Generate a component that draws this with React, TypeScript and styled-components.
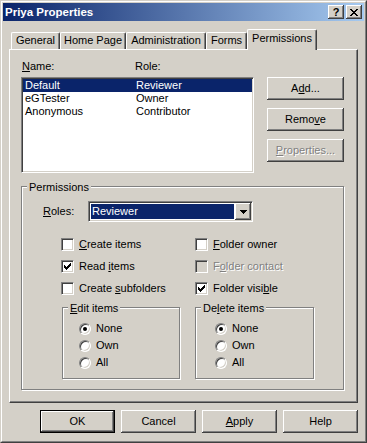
import React from "react";
import styled, { createGlobalStyle } from "styled-components";

const BG = "#D4D0C8";
const SHADOW = "#808080";
const DARK = "#404040";
const NAVY = "#0A246A";

const GlobalStyle = createGlobalStyle`
  html, body { margin: 0; padding: 0; }
  body {
    background: ${BG};
    font-family: "Liberation Sans", Arial, sans-serif;
    font-size: 11px;
    line-height: 13px;
    color: #000;
  }
  * { box-sizing: border-box; }
  u { text-decoration: underline; text-underline-offset: 1px; }
`;

const Window = styled.div`
  width: 367px;
  height: 443px;
  background: ${BG};
  border: 1px solid;
  border-color: ${BG} ${DARK} ${DARK} ${BG};
  display: flex;
`;

const Frame = styled.div`
  flex: 1;
  display: flex;
  flex-direction: column;
  border: 1px solid;
  border-color: #fff ${SHADOW} ${SHADOW} #fff;
  padding: 1px;
`;

const TitleBar = styled.div`
  height: 18px;
  display: flex;
  align-items: center;
  padding: 0 2px;
  background: linear-gradient(to right, ${NAVY}, #a6caf0);
`;

const TitleText = styled.div`
  flex: 1;
  color: #fff;
  font-weight: bold;
  font-size: 11.5px;
  white-space: nowrap;
`;

const CaptionButtons = styled.div`
  display: flex;
  gap: 2px;
`;

const CaptionButton = styled.div`
  width: 16px;
  height: 14px;
  background: ${BG};
  display: flex;
  align-items: center;
  justify-content: center;
  box-shadow: inset -1px -1px ${DARK}, inset 1px 1px #fff, inset -2px -2px ${SHADOW};
  font-weight: bold;
  font-size: 11px;
  line-height: 12px;
`;

const Body = styled.div`
  flex: 1;
  display: flex;
  flex-direction: column;
  padding: 8px 6px 0;
`;

const TabStrip = styled.div`
  height: 20px;
  display: flex;
  align-items: flex-end;
  padding-left: 2px;
  position: relative;
  z-index: 1;
`;

const Tab = styled.div<{ $active?: boolean; $w: number }>`
  width: ${(p) => p.$w}px;
  height: ${(p) => (p.$active ? 21 : 17)}px;
  margin-bottom: ${(p) => (p.$active ? -1 : 0)}px;
  background: ${BG};
  border-top: 1px solid #fff;
  border-left: 1px solid #fff;
  border-right: 1px solid ${DARK};
  border-radius: 2px 2px 0 0;
  box-shadow: inset -1px 0 ${SHADOW};
  text-align: center;
  padding-top: ${(p) => (p.$active ? 2 : 1)}px;
  white-space: nowrap;
`;

const Panel = styled.div`
  height: 354px;
  display: flex;
  flex-direction: column;
  border: 1px solid;
  border-color: #fff ${DARK} ${DARK} #fff;
  box-shadow: inset -1px -1px ${SHADOW};
  padding: 10px 0 0 11px;
`;

const TopSection = styled.div`
  display: flex;
`;

const ListColumn = styled.div`
  display: flex;
  flex-direction: column;
`;

const ListHeader = styled.div`
  display: grid;
  grid-template-columns: 113px 1fr;
  height: 13px;
  padding-left: 1px;
  margin-bottom: 4px;
`;

const ListBox = styled.div`
  width: 233px;
  height: 96px;
  background: #fff;
  border: 1px solid;
  border-color: ${SHADOW} #fff #fff ${SHADOW};
  box-shadow: inset 1px 1px ${DARK}, inset -1px -1px ${BG};
  padding: 1px;
`;

const ListRow = styled.div<{ $selected?: boolean }>`
  display: grid;
  grid-template-columns: 111px 1fr;
  height: 13px;
  padding-left: 2px;
  background: ${(p) => (p.$selected ? NAVY : "transparent")};
  color: ${(p) => (p.$selected ? "#fff" : "#000")};
  white-space: nowrap;
`;

const ButtonColumn = styled.div`
  display: flex;
  flex-direction: column;
  gap: 8px;
  margin-left: 13px;
  padding-top: 17px;
`;

const Button = styled.button<{ $w: number; $default?: boolean }>`
  width: ${(p) => p.$w}px;
  height: 23px;
  padding: 0;
  margin: 0;
  font: inherit;
  color: #000;
  background: ${BG};
  border: ${(p) => (p.$default ? "1px solid #000" : "none")};
  box-shadow: inset -1px -1px ${DARK}, inset 1px 1px #fff, inset -2px -2px ${SHADOW};
  &:disabled {
    color: ${SHADOW};
    text-shadow: 1px 1px #fff;
  }
`;

const GroupBox = styled.div<{ $w: number; $h: number }>`
  width: ${(p) => p.$w}px;
  height: ${(p) => p.$h}px;
  display: flex;
  flex-direction: column;
  border: 1px solid ${SHADOW};
  box-shadow: 1px 1px #fff, inset 1px 1px #fff;
`;

const PermissionsGroup = styled(GroupBox)`
  margin-top: 13px;
`;

const Legend = styled.div`
  align-self: flex-start;
  margin: -6px 0 0 5px;
  padding: 0 2px;
  background: ${BG};
  height: 13px;
  white-space: nowrap;
`;

const RolesRow = styled.div`
  display: flex;
  align-items: center;
  margin-top: 7px;
  padding-left: 21px;
`;

const FieldLabel = styled.span`
  width: 45px;
`;

const Combo = styled.div`
  width: 165px;
  height: 21px;
  display: flex;
  border: 1px solid;
  border-color: ${SHADOW} #fff #fff ${SHADOW};
  box-shadow: inset 1px 1px ${DARK}, inset -1px -1px ${BG};
  padding: 1px;
  background: #fff;
`;

const ComboField = styled.div`
  flex: 1;
  margin: 1px;
  background: ${NAVY};
  color: #fff;
  padding-left: 1px;
  display: flex;
  align-items: center;
`;

const ComboButton = styled.div`
  width: 16px;
  display: flex;
  align-items: center;
  justify-content: center;
  background: ${BG};
  box-shadow: inset -1px -1px ${DARK}, inset 1px 1px #fff, inset -2px -2px ${SHADOW};
`;

const CheckGrid = styled.div`
  display: grid;
  grid-template-columns: 134px 1fr;
  row-gap: 9px;
  margin-top: 16px;
  padding-left: 39px;
`;

const CheckItem = styled.label`
  display: flex;
  align-items: center;
  gap: 5px;
  height: 13px;
  white-space: nowrap;
`;

const CheckBox = styled.span<{ $disabled?: boolean }>`
  width: 13px;
  height: 13px;
  flex: none;
  display: flex;
  align-items: center;
  justify-content: center;
  background: ${(p) => (p.$disabled ? BG : "#fff")};
  border: 1px solid;
  border-color: ${SHADOW} #fff #fff ${SHADOW};
  box-shadow: inset 1px 1px ${DARK}, inset -1px -1px ${BG};
`;

const ItemText = styled.span<{ $disabled?: boolean }>`
  color: ${(p) => (p.$disabled ? SHADOW : "#000")};
  text-shadow: ${(p) => (p.$disabled ? "1px 1px #fff" : "none")};
`;

const SubGroups = styled.div`
  display: flex;
  gap: 15px;
  margin-top: 12px;
  padding-left: 40px;
`;

const RadioList = styled.div<{ $indent: number }>`
  display: flex;
  flex-direction: column;
  margin-top: 5px;
  padding-left: ${(p) => p.$indent}px;
`;

const RadioItem = styled.label`
  display: flex;
  align-items: center;
  gap: 5px;
  height: 17px;
`;

const Radio = styled.span<{ $checked?: boolean }>`
  width: 12px;
  height: 12px;
  flex: none;
  border-radius: 50%;
  background: #fff;
  border: 1px solid;
  border-color: ${SHADOW} #fff #fff ${SHADOW};
  box-shadow: inset 1px 1px ${DARK}, inset -1px -1px ${BG};
  display: flex;
  align-items: center;
  justify-content: center;
  &::after {
    content: "";
    width: 4px;
    height: 4px;
    border-radius: 50%;
    background: #000;
    display: ${(p) => (p.$checked ? "block" : "none")};
  }
`;

const ButtonRow = styled.div`
  display: flex;
  justify-content: flex-end;
  gap: 6px;
  margin-top: 7px;
`;

const CheckMark = () => (
  <svg width="7" height="7" viewBox="0 0 7 7" shapeRendering="crispEdges">
    {[2, 3, 4, 3, 2, 1, 0].map((y, x) => (
      <rect key={x} x={x} y={y} width="1" height="3" fill="#000" />
    ))}
  </svg>
);

const DownArrow = () => (
  <svg width="7" height="4" viewBox="0 0 7 4" shapeRendering="crispEdges">
    {[0, 1, 2, 3].map((y) => (
      <rect key={y} x={y} y={y} width={7 - 2 * y} height="1" fill="#000" />
    ))}
  </svg>
);

const CloseGlyph = () => (
  <svg width="8" height="7" viewBox="0 0 8 7" shapeRendering="crispEdges">
    {[0, 1, 2, 3, 2, 1, 0].map((x, y) => (
      <React.Fragment key={y}>
        <rect x={x} y={y} width="2" height="1" fill="#000" />
        <rect x={6 - x} y={y} width="2" height="1" fill="#000" />
      </React.Fragment>
    ))}
  </svg>
);

const tabs = [
  { label: "General", w: 49 },
  { label: "Home Page", w: 66 },
  { label: "Administration", w: 80 },
  { label: "Forms", w: 41 },
  { label: "Permissions", w: 70, active: true },
];

const members = [
  { name: "Default", role: "Reviewer", selected: true },
  { name: "eGTester", role: "Owner" },
  { name: "Anonymous", role: "Contributor" },
];

type Check = { pre: string; key: string; post: string; checked?: boolean; disabled?: boolean };

const checks: Check[] = [
  { pre: "", key: "C", post: "reate items" },
  { pre: "", key: "F", post: "older owner" },
  { pre: "Read ", key: "i", post: "tems", checked: true },
  { pre: "F", key: "o", post: "lder contact", disabled: true },
  { pre: "Create ", key: "s", post: "ubfolders" },
  { pre: "Folder visi", key: "b", post: "le", checked: true },
];

const RadioGroup = ({ indent }: { indent: number }) => (
  <RadioList $indent={indent}>
    {["None", "Own", "All"].map((o, i) => (
      <RadioItem key={o}>
        <Radio $checked={i === 0} />
        <span>{o}</span>
      </RadioItem>
    ))}
  </RadioList>
);

export default function App() {
  return (
    <>
      <GlobalStyle />
      <Window>
        <Frame>
          <TitleBar>
            <TitleText>Priya Properties</TitleText>
            <CaptionButtons>
              <CaptionButton>?</CaptionButton>
              <CaptionButton>
                <CloseGlyph />
              </CaptionButton>
            </CaptionButtons>
          </TitleBar>
          <Body>
            <TabStrip>
              {tabs.map((t) => (
                <Tab key={t.label} $w={t.w} $active={t.active}>
                  {t.label}
                </Tab>
              ))}
            </TabStrip>
            <Panel>
              <TopSection>
                <ListColumn>
                  <ListHeader>
                    <span>
                      <u>N</u>ame:
                    </span>
                    <span>Role:</span>
                  </ListHeader>
                  <ListBox>
                    {members.map((m) => (
                      <ListRow key={m.name} $selected={m.selected}>
                        <span>{m.name}</span>
                        <span>{m.role}</span>
                      </ListRow>
                    ))}
                  </ListBox>
                </ListColumn>
                <ButtonColumn>
                  <Button $w={77}>
                    A<u>d</u>d...
                  </Button>
                  <Button $w={77}>
                    Remo<u>v</u>e
                  </Button>
                  <Button $w={77} disabled>
                    <u>P</u>roperties...
                  </Button>
                </ButtonColumn>
              </TopSection>
              <PermissionsGroup $w={323} $h={204}>
                <Legend>Permissions</Legend>
                <RolesRow>
                  <FieldLabel>
                    <u>R</u>oles:
                  </FieldLabel>
                  <Combo>
                    <ComboField>Reviewer</ComboField>
                    <ComboButton>
                      <DownArrow />
                    </ComboButton>
                  </Combo>
                </RolesRow>
                <CheckGrid>
                  {checks.map((c) => (
                    <CheckItem key={c.pre + c.key + c.post}>
                      <CheckBox $disabled={c.disabled}>{c.checked && <CheckMark />}</CheckBox>
                      <ItemText $disabled={c.disabled}>
                        {c.pre}
                        <u>{c.key}</u>
                        {c.post}
                      </ItemText>
                    </CheckItem>
                  ))}
                </CheckGrid>
                <SubGroups>
                  <GroupBox $w={118} $h={72}>
                    <Legend>
                      <u>E</u>dit items
                    </Legend>
                    <RadioGroup indent={16} />
                  </GroupBox>
                  <GroupBox $w={119} $h={72}>
                    <Legend>
                      De<u>l</u>ete items
                    </Legend>
                    <RadioGroup indent={19} />
                  </GroupBox>
                </SubGroups>
              </PermissionsGroup>
            </Panel>
            <ButtonRow>
              <Button $w={75} $default>
                OK
              </Button>
              <Button $w={75}>Cancel</Button>
              <Button $w={75}>
                <u>A</u>pply
              </Button>
              <Button $w={75}>Help</Button>
            </ButtonRow>
          </Body>
        </Frame>
      </Window>
    </>
  );
}
